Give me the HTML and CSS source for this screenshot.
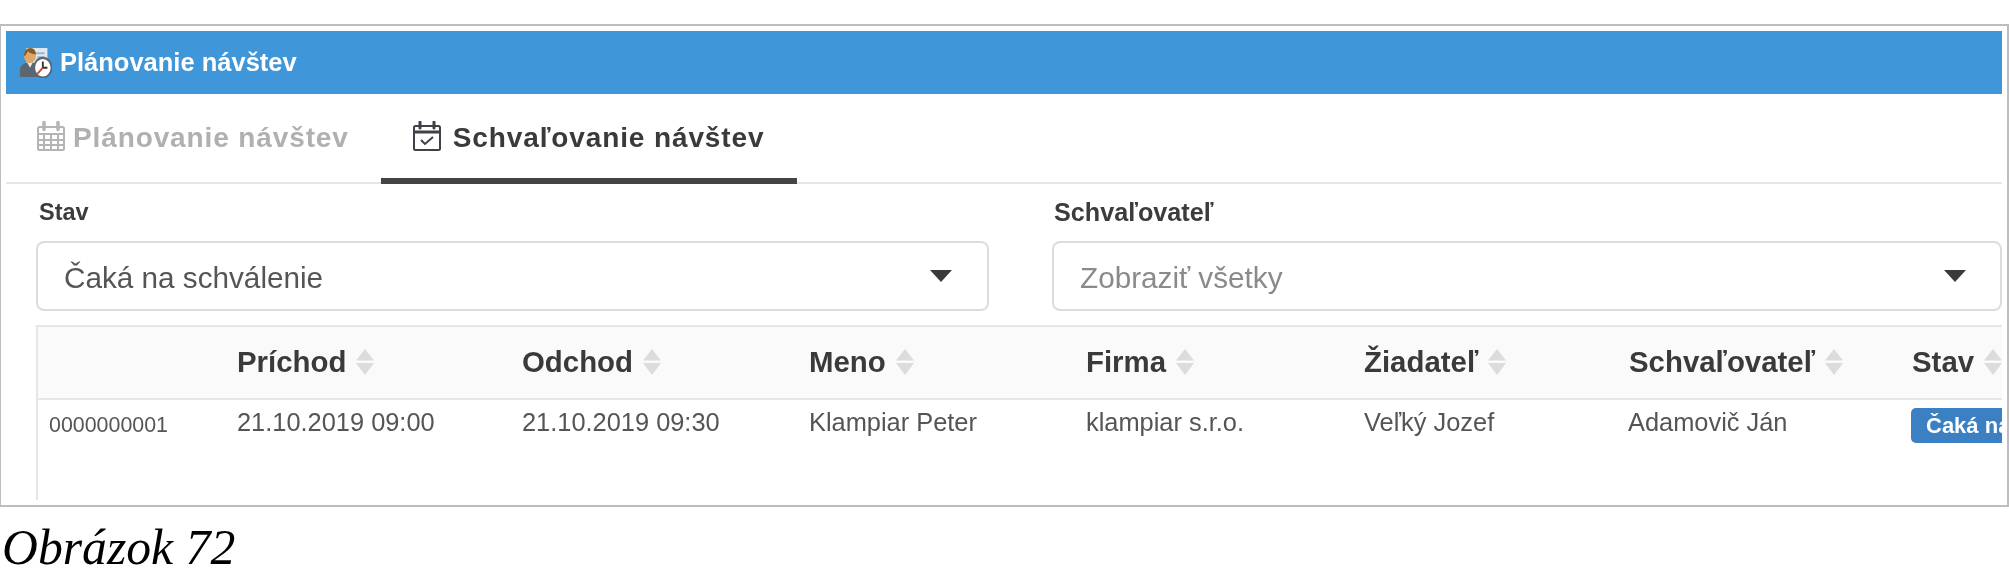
FILE: index.html
```html
<!DOCTYPE html>
<html lang="sk">
<head>
<meta charset="utf-8">
<title>Plánovanie návštev</title>
<link rel="stylesheet" href="styles.css">
</head>
<body>
<div class="shot">
  <div class="bar">
    <svg class="bar-icon" width="33" height="31" viewBox="0 0 36 30" preserveAspectRatio="none">
      <rect x="8" y="1" width="23" height="20" fill="#dfe9f2"/>
      <path d="M18 6h10M20 10h8M21 14h7" stroke="#9fb6ca" stroke-width="2"/>
      <path d="M1 29v-6c0-5 4-7 8-8h6c4 1 8 3 8 8v6z" fill="#5c6670"/>
      <path d="M9 15l3 5 3-5z" fill="#e9edf0"/>
      <circle cx="12" cy="9" r="6.500" fill="#e0a868"/>
      <path d="M5.500 9c0-5 3-8 7-8s6 3 6 6c-3 0-7-1-9-3-1 2-2 4-4 5z" fill="#8a5a24"/>
      <circle cx="26" cy="20" r="9.500" fill="#fff" stroke="#5a6670" stroke-width="2"/>
      <path d="M26 14v6h5" fill="none" stroke="#333" stroke-width="2"/>
      <path d="M20 26l6-6" stroke="#d8402f" stroke-width="2"/>
    </svg>
    <span>Plánovanie návštev</span>
  </div>
  <div class="tabs">
    <div class="tab tab-first">
      <svg class="tab-icon" width="30" height="30" viewBox="0 0 30 30" fill="none" stroke="#b4b4b4" stroke-width="2">
        <rect x="2" y="6" width="26" height="23" rx="1.500"/>
        <path d="M2 13h26M2 19h26M2 24h26M8 13v16M15 13v16M22 13v16"/>
        <path d="M8 1.500v7M22 1.500v7" stroke-width="3.500" stroke-linecap="round"/>
      </svg>
      <span>Plánovanie návštev</span>
    </div>
    <div class="tab tab-active">
      <svg class="tab-icon" width="30" height="30" viewBox="0 0 30 30" fill="none" stroke="#3f4048" stroke-width="2">
        <rect x="2" y="5" width="26" height="24" rx="1.500"/>
        <path d="M2 11h26" stroke-width="3"/>
        <path d="M8 1v6M22 1v6" stroke-width="3" stroke-linecap="round"/>
        <path d="M9 19l4 4 8-7"/>
      </svg>
      <span>Schvaľovanie návštev</span>
    </div>
  </div>
  <div class="filters">
    <div class="field">
      <label class="label label-stav">Stav</label>
      <div class="select"><span>Čaká na schválenie</span><i class="caret caret-left"></i></div>
    </div>
    <div class="field">
      <label class="label label-approver">Schvaľovateľ</label>
      <div class="select select-empty"><span>Zobraziť všetky</span><i class="caret"></i></div>
    </div>
  </div>
  <div class="table">
    <div class="row head">
      <div class="cell"></div>
      <div class="cell">Príchod<svg class="sort" width="18" height="26" viewBox="0 0 18 26"><path d="M9 0l9 11.500H0zM9 26l9-12H0z"/></svg></div>
      <div class="cell">Odchod<svg class="sort" width="18" height="26" viewBox="0 0 18 26"><path d="M9 0l9 11.500H0zM9 26l9-12H0z"/></svg></div>
      <div class="cell">Meno<svg class="sort" width="18" height="26" viewBox="0 0 18 26"><path d="M9 0l9 11.500H0zM9 26l9-12H0z"/></svg></div>
      <div class="cell">Firma<svg class="sort" width="18" height="26" viewBox="0 0 18 26"><path d="M9 0l9 11.500H0zM9 26l9-12H0z"/></svg></div>
      <div class="cell">Žiadateľ<svg class="sort" width="18" height="26" viewBox="0 0 18 26"><path d="M9 0l9 11.500H0zM9 26l9-12H0z"/></svg></div>
      <div class="cell">Schvaľovateľ<svg class="sort" width="18" height="26" viewBox="0 0 18 26"><path d="M9 0l9 11.500H0zM9 26l9-12H0z"/></svg></div>
      <div class="cell">Stav<svg class="sort" width="18" height="26" viewBox="0 0 18 26"><path d="M9 0l9 11.500H0zM9 26l9-12H0z"/></svg></div>
    </div>
    <div class="row body">
      <div class="cell cell-id">0000000001</div>
      <div class="cell">21.10.2019 09:00</div>
      <div class="cell">21.10.2019 09:30</div>
      <div class="cell">Klampiar Peter</div>
      <div class="cell">klampiar s.r.o.</div>
      <div class="cell">Veľký Jozef</div>
      <div class="cell cell-approver">Adamovič Ján</div>
      <div class="cell cell-status"><span class="badge">Čaká na schválenie</span></div>
    </div>
  </div>
</div>
<p class="caption">Obrázok 72</p>
</body>
</html>
```

FILE: styles.css
```css
html, body { margin: 0; padding: 0; background: #fff; overflow: hidden; }
body { font-family: "Liberation Sans", Arial, sans-serif; color: #333; }

.shot {
  margin-top: 24px;
  height: 483px;
  box-sizing: border-box;
  border: 2px solid #bdbdbd;
  border-left-width: 1px;
  padding: 5px;
  overflow: hidden;
  filter: blur(0.5px);
}

.bar {
  height: 63px;
  background: #3f96d8;
  display: flex;
  align-items: center;
  gap: 8px;
  padding-left: 13px;
  color: #fff;
  font-size: 25.500px;
  font-weight: 700;
}
.bar-icon { flex: none; }

.tabs {
  height: 90px;
  box-sizing: border-box;
  border-bottom: 2px solid #e6e6e6;
  display: flex;
  font-size: 28px;
  font-weight: 700;
  letter-spacing: 0.88px;
}
.tab {
  height: 90px;
  box-sizing: border-box;
  padding: 4px 33px 6px 31px;
  display: flex;
  align-items: center;
  gap: 11px;
}
.tab-first { padding-left: 30px; padding-right: 32px; color: #b0b0b0; gap: 7px; }
.tab-active { color: #3a3a3a; border-bottom: 6px solid #444; padding-bottom: 0; }
.tab-icon { flex: none; margin-bottom: 4px; }

.filters {
  display: grid;
  grid-template-columns: 953px 950px;
  column-gap: 63px;
  padding-left: 30px;
}
.label {
  display: block;
  height: 57px;
  line-height: 56px;
  font-weight: 700;
  color: #3c3c3c;
}
.label-stav { padding-left: 3px; font-size: 23.500px; }
.label-approver { padding-left: 2px; font-size: 25.200px; }
.select {
  height: 70px;
  box-sizing: border-box;
  border: 2px solid #dcdcdc;
  border-radius: 8px;
  display: flex;
  align-items: center;
  justify-content: space-between;
  padding: 3px 34px 0 26px;
  font-size: 29.700px;
  color: #555;
}
.select-empty { color: #8a8a8a; }
.caret {
  width: 0;
  height: 0;
  margin-top: -3px;
  border-left: 11px solid transparent;
  border-right: 11px solid transparent;
  border-top: 12px solid #3a3a3a;
}
.caret-left { margin-right: 1px; }

.table {
  margin: 14px 0 0 30px;
  height: 175px;
  border-left: 2px solid #e6e6e6;
  overflow: hidden;
}
.row {
  display: grid;
  grid-template-columns: 188px 285px 287px 277px 278px 265px 283px 200px;
  white-space: nowrap;
}
.head {
  height: 75px;
  box-sizing: border-box;
  background: #fafafa;
  border-top: 2px solid #e6e6e6;
  border-bottom: 2px solid #e6e6e6;
  font-size: 29.400px;
  font-weight: 700;
  color: #3a3a3a;
}
.head .cell { display: flex; align-items: center; gap: 10px; padding-bottom: 2px; }
.body { font-size: 25.400px; color: #555; padding-top: 8px; }
.cell { padding-left: 11px; }
.cell-id { font-size: 21.400px; padding-top: 5px; }
.cell-approver { padding-left: 10px; }
.cell-status { padding-left: 10px; }
.sort { fill: #dcdcdc; flex: none; }
.badge {
  display: inline-block;
  height: 35px;
  line-height: 35px;
  box-sizing: border-box;
  background: #3a80c2;
  color: #fff;
  border-radius: 5px;
  padding: 0 15px;
  font-size: 22px;
  font-weight: 700;
}

.caption {
  margin: 12px 0 0 2px;
  font-family: "Liberation Serif", "Times New Roman", serif;
  font-style: italic;
  font-size: 49.700px;
  line-height: 58px;
  color: #000;
}
```
